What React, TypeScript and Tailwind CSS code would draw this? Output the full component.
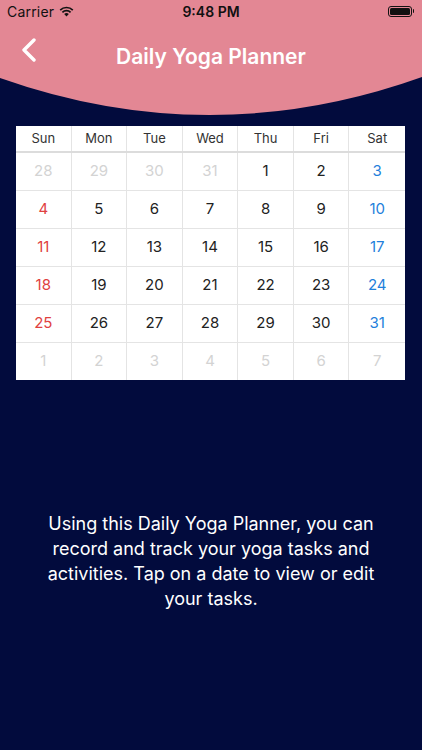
import React from 'react';

const days = ['Sun', 'Mon', 'Tue', 'Wed', 'Thu', 'Fri', 'Sat'];

// calendar cells: [label, muted]
const weeks: [number, boolean][][] = [
  [[28, true], [29, true], [30, true], [31, true], [1, false], [2, false], [3, false]],
  [[4, false], [5, false], [6, false], [7, false], [8, false], [9, false], [10, false]],
  [[11, false], [12, false], [13, false], [14, false], [15, false], [16, false], [17, false]],
  [[18, false], [19, false], [20, false], [21, false], [22, false], [23, false], [24, false]],
  [[25, false], [26, false], [27, false], [28, false], [29, false], [30, false], [31, false]],
  [[1, true], [2, true], [3, true], [4, true], [5, true], [6, true], [7, true]],
];

const cellColor = (col: number, muted: boolean) => {
  if (muted) return 'text-[#d3d3d3]';
  if (col === 0) return 'text-[#e0413f]';
  if (col === 6) return 'text-[#1f7fdb]';
  return 'text-[#222222]';
};

export default function App() {
  return (
    <div
      className="relative w-[422px] h-[750px] bg-[#020b3d] overflow-hidden"
      style={{ fontFamily: 'Inter, "Open Sans", sans-serif' }}
    >
      {/* pink curved header */}
      <svg className="absolute left-0 top-0" width="422" height="130" viewBox="0 0 422 130">
        <path d="M0 0 H422 V77 Q211 152.5 0 78 Z" fill="#e38794" />
      </svg>

      <div className="relative">
        {/* status bar */}
        <div className="h-[22px] flex items-center justify-between px-[7px] text-[14px] text-[#111]">
          <div className="flex items-center gap-[5px] w-[100px]">
            <span className="tracking-[0.2px]">Carrier</span>
            <svg width="15" height="11" viewBox="0 0 15 11">
              <path d="M7.5 10.5 L5.2 8.1 A3.3 3.3 0 0 1 9.8 8.1 Z" fill="#111" />
              <path d="M3.4 6.3 A5.8 5.8 0 0 1 11.6 6.3" stroke="#111" strokeWidth="1.7" fill="none" />
              <path d="M1.2 4.1 A8.9 8.9 0 0 1 13.8 4.1" stroke="#111" strokeWidth="1.7" fill="none" />
            </svg>
          </div>
          <span className="font-semibold">9:48 PM</span>
          <div className="w-[100px] flex justify-end pr-[1px]">
            <div className="flex items-center">
              <div className="w-[24px] h-[11px] rounded-[3px] border border-[#111] p-[1px]">
                <div className="w-full h-full rounded-[1.5px] bg-[#111]" />
              </div>
              <div className="w-[1.5px] h-[4px] bg-[#111] rounded-r-sm ml-[0.5px]" />
            </div>
          </div>
        </div>

        {/* nav */}
        <div className="relative h-[60px] flex items-center justify-center">
          <svg className="absolute left-[21px] top-[16px]" width="16" height="24" viewBox="0 0 16 24">
            <path d="M13 2 L3 12 L13 22" stroke="#fff" strokeWidth="3.4" fill="none" strokeLinecap="round" strokeLinejoin="round" />
          </svg>
          <h1 className="text-white text-[21px] font-semibold mt-[10px]">Daily Yoga Planner</h1>
        </div>

        {/* calendar */}
        <div className="ml-[16px] mt-[44px] w-[389px] bg-white">
          <div className="grid grid-cols-7 border-b-2 border-[#dcdcdc]">
            {days.map((d, i) => (
              <div
                key={d}
                className={`h-[25px] flex items-center justify-center text-[13px] text-[#333] ${i < 6 ? 'border-r border-[#e4e4e4]' : ''}`}
              >
                {d}
              </div>
            ))}
          </div>
          {weeks.map((w, r) => (
            <div key={r} className={`grid grid-cols-7 ${r < 5 ? 'border-b border-[#e4e4e4]' : ''}`}>
              {w.map(([n, muted], c) => (
                <div
                  key={c}
                  className={`h-[37px] flex items-center justify-center text-[15px] ${cellColor(c, muted)} ${c < 6 ? 'border-r border-[#e4e4e4]' : ''}`}
                >
                  {n}
                </div>
              ))}
            </div>
          ))}
        </div>

        {/* description */}
        <p className="mt-[131px] px-[38px] text-center text-white text-[18px] leading-[25px]">
          Using this Daily Yoga Planner, you can record and track your yoga tasks and activities. Tap on a date to view or edit your tasks.
        </p>
      </div>
    </div>
  );
}
